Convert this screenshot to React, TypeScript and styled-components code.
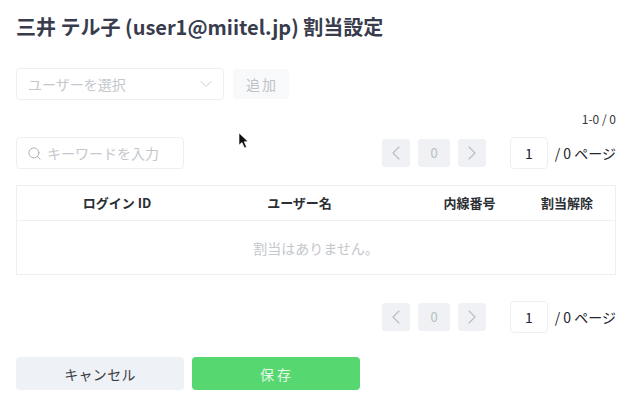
import { createGlobalStyle } from "styled-components";
import styled from "styled-components";
import { ChevronDown, ChevronLeft, ChevronRight, Search } from "lucide-react";

const GlobalStyle = createGlobalStyle`
  html, body {
    margin: 0;
    padding: 0;
    background: #fff;
  }
  * {
    box-sizing: border-box;
  }
`;

const Modal = styled.div`
  position: relative;
  width: 634px;
  height: 414px;
  overflow: hidden;
  padding: 15px 18px 0 16px;
  background: #fff;
  color: #22252b;
  font-family: "Noto Sans CJK JP", "Noto Sans", sans-serif;
`;

const Title = styled.h2`
  margin: 0;
  height: 24px;
  font-size: 20px;
  line-height: 24px;
  font-weight: 700;
  color: #383c4d;
  white-space: nowrap;
`;

const AddRow = styled.div`
  display: flex;
  align-items: center;
  gap: 9px;
  margin-top: 29px;
`;

const SelectBox = styled.div`
  display: flex;
  align-items: center;
  justify-content: space-between;
  width: 208px;
  height: 32px;
  padding: 0 7px 0 11px;
  border: 1px solid #edeff2;
  border-radius: 4px;
  font-size: 14px;
  color: #c4c7cc;
`;

const AddButton = styled.div`
  display: flex;
  align-items: center;
  justify-content: center;
  width: 56px;
  height: 30px;
  padding-left: 2px;
  border-radius: 4px;
  background: #f8f9fa;
  font-size: 14px;
  letter-spacing: 2px;
  color: #bfc2c7;
`;

const RangeLabel = styled.div`
  margin-top: 10px;
  height: 18px;
  line-height: 18px;
  text-align: right;
  font-size: 12px;
  color: #33363b;
`;

const ToolRow = styled.div`
  display: flex;
  align-items: center;
  justify-content: space-between;
  margin-top: 9px;
`;

const SearchBox = styled.div`
  display: flex;
  align-items: center;
  gap: 5px;
  width: 168px;
  height: 32px;
  padding: 0 10px;
  border: 1px solid #edeff2;
  border-radius: 4px;
  font-size: 14px;
  color: #c4c7cc;
  white-space: nowrap;
`;

const Pager = styled.div<{ $end?: boolean }>`
  display: flex;
  align-items: center;
  margin-left: ${({ $end }) => ($end ? "auto" : "0")};
`;

const PageButton = styled.div<{ $wide?: boolean }>`
  display: flex;
  align-items: center;
  justify-content: center;
  width: ${({ $wide }) => ($wide ? "32px" : "28px")};
  height: 28px;
  margin-right: 8px;
  border-radius: 3px;
  background: #eff1f4;
  font-size: 13px;
  line-height: 26px;
  padding-bottom: 1px;
  color: #b8bcc2;
`;

const PageInput = styled.div`
  display: flex;
  align-items: center;
  justify-content: center;
  width: 38px;
  height: 32px;
  margin-left: 16px;
  border: 1px solid #edeff2;
  border-radius: 4px;
  font-size: 14px;
  color: #22252b;
`;

const PageTotal = styled.span`
  width: 68px;
  text-align: right;
  font-size: 14px;
  color: #22252b;
  white-space: nowrap;
`;

const Table = styled.div`
  margin-top: 16px;
  width: 600px;
  height: 90px;
  border: 1px solid #edeff2;
`;

const HeadRow = styled.div`
  display: grid;
  grid-template-columns: 200px 165px 135px 1fr;
  align-items: center;
  height: 35px;
  padding-bottom: 1px;
  border-bottom: 1px solid #edeff2;
`;

const HeadCell = styled.div<{ $inset?: number }>`
  padding-left: ${({ $inset }) => $inset ?? 0}px;
  text-align: center;
  font-size: 13px;
  font-weight: 700;
  color: #2b2e33;
`;

const EmptyRow = styled.div`
  display: flex;
  align-items: center;
  justify-content: center;
  height: 53px;
  font-size: 14px;
  color: #c4c7cc;
`;

const BottomPager = styled(ToolRow)`
  margin-top: 26px;
`;

const Footer = styled.div`
  display: flex;
  gap: 8px;
  margin-top: 24px;
`;

const FooterButton = styled.div<{ $primary?: boolean }>`
  display: flex;
  align-items: center;
  justify-content: center;
  width: 168px;
  height: 33px;
  padding-left: ${({ $primary }) => ($primary ? "2px" : "0")};
  border-radius: 4px;
  font-size: 14px;
  letter-spacing: ${({ $primary }) => ($primary ? "3px" : "0.3px")};
  background: ${({ $primary }) => ($primary ? "#57d76f" : "#eef1f5")};
  color: ${({ $primary }) => ($primary ? "#e6f9ea" : "#3a3d44")};
`;

const Cursor = styled.svg`
  position: absolute;
  left: 238px;
  top: 132px;
`;

function Pagination({ end }: { end?: boolean }) {
  return (
    <Pager $end={end}>
      <PageButton>
        <ChevronLeft size={24} strokeWidth={1.1} />
      </PageButton>
      <PageButton $wide>0</PageButton>
      <PageButton>
        <ChevronRight size={24} strokeWidth={1.1} />
      </PageButton>
      <PageInput>1</PageInput>
      <PageTotal>/ 0 ページ</PageTotal>
    </Pager>
  );
}

export default function App() {
  return (
    <>
      <GlobalStyle />
      <Modal>
        <Title>三井 テル子 (user1@miitel.jp) 割当設定</Title>

        <AddRow>
          <SelectBox>
            ユーザーを選択
            <ChevronDown size={20} strokeWidth={1} color="#bfc2c7" />
          </SelectBox>
          <AddButton>追加</AddButton>
        </AddRow>

        <RangeLabel>1-0 / 0</RangeLabel>

        <ToolRow>
          <SearchBox>
            <Search size={15} strokeWidth={1.5} color="#a9acb2" />
            キーワードを入力
          </SearchBox>
          <Pagination />
        </ToolRow>

        <Table>
          <HeadRow>
            <HeadCell>ログイン ID</HeadCell>
            <HeadCell>ユーザー名</HeadCell>
            <HeadCell $inset={40}>内線番号</HeadCell>
            <HeadCell $inset={2}>割当解除</HeadCell>
          </HeadRow>
          <EmptyRow>割当はありません。</EmptyRow>
        </Table>

        <BottomPager>
          <Pagination end />
        </BottomPager>

        <Footer>
          <FooterButton>キャンセル</FooterButton>
          <FooterButton $primary>保存</FooterButton>
        </Footer>

        <Cursor width="12" height="18" viewBox="0 0 12 18">
          <path d="M1 1 L1 13 L4 10.5 L6.5 16 L8.5 15 L6.2 9.8 L10 9.5 Z" fill="#111" stroke="#fff" strokeWidth="0.6" />
        </Cursor>
      </Modal>
    </>
  );
}
